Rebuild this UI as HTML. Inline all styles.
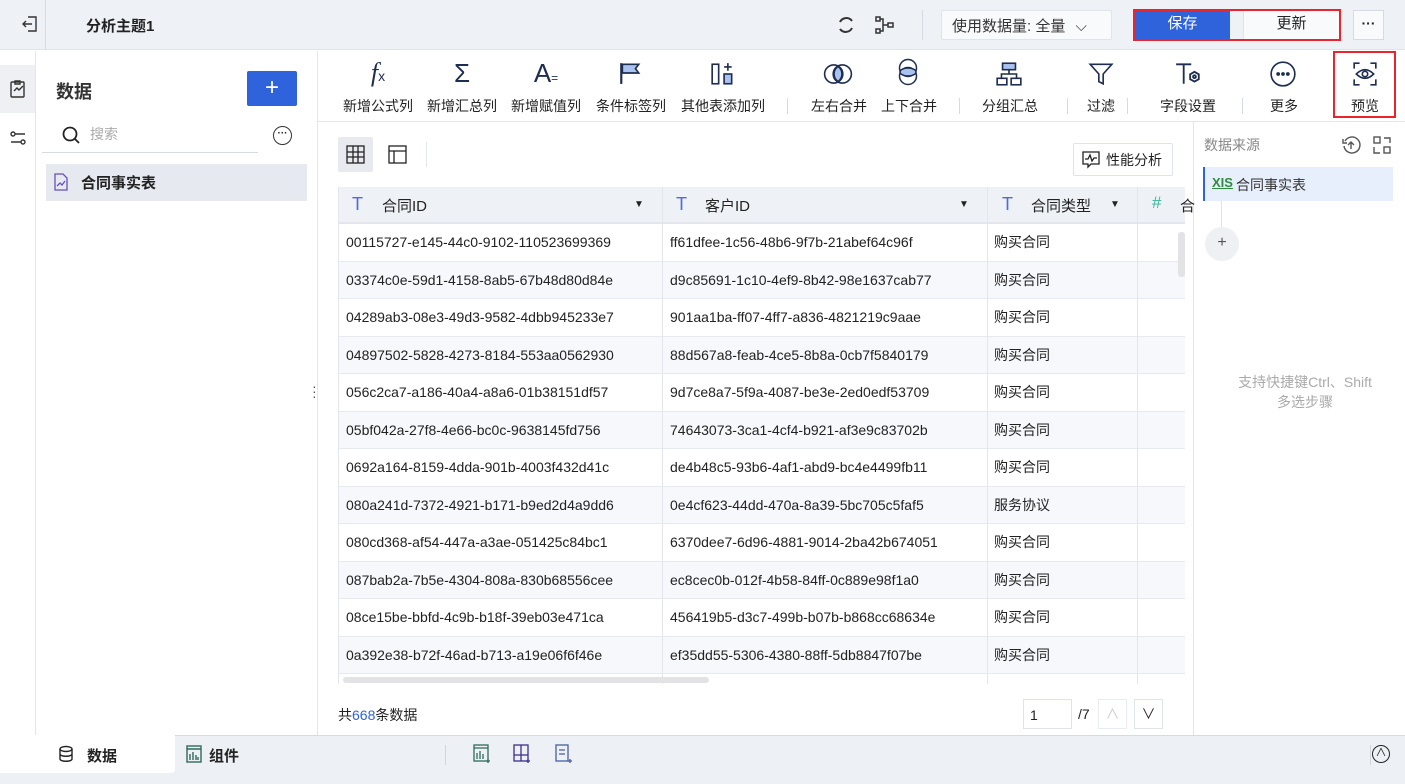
<!DOCTYPE html>
<html><head><meta charset="utf-8"><style>
*{box-sizing:border-box;margin:0;padding:0}
body{width:1405px;height:784px;overflow:hidden;font-family:"Liberation Sans","Noto Sans CJK SC",sans-serif;font-size:14px;color:#222;background:#fff;position:relative}
.a{position:absolute}
.top{left:0;top:0;width:1405px;height:50px;background:#eef1f6;border-bottom:1px solid #dfe3ea}
.tb{font-size:14px;color:#222;text-align:center;width:80px}
.row{position:absolute;left:338px;width:847px;height:37.5px;border-bottom:1px solid #e6e9ef;font-size:14px;color:#222}
.row span{position:absolute;top:10px}
.row span.c{top:8px}
.sh{background:#f7f8fb}
.vl{position:absolute;top:187px;width:1px;height:497px;background:#e3e6ec}
</style></head><body>
<div class="a top"></div>
<div class="a" style="left:45px;top:0;width:1px;height:50px;background:#d6dae2"></div>
<svg class="a" style="left:20px;top:14px" width="20" height="20" viewBox="0 0 20 20" fill="none" stroke="#333" stroke-width="1.4"><path d="M8 3h8v14H8M3 10h9M6 7l-3 3 3 3"/></svg>
<div class="a" style="left:86px;top:15px;font-weight:bold;font-size:15px">分析主题1</div>
<svg class="a" style="left:835px;top:14px" width="22" height="22" viewBox="0 0 22 22" fill="none" stroke="#333" stroke-width="2"><path d="M5 8a7 7 0 0 1 12-1M17 14a7 7 0 0 1-12 1"/></svg>
<svg class="a" style="left:874px;top:14px" width="22" height="22" viewBox="0 0 22 22" fill="none" stroke="#333" stroke-width="1.5"><rect x="2" y="3" width="4" height="4"/><rect x="2" y="15" width="4" height="4"/><rect x="14" y="9" width="5" height="4"/><path d="M6 5h3v12H6M9 11h5"/></svg>
<div class="a" style="left:922px;top:10px;width:1px;height:30px;background:#d6dae2"></div>
<div class="a" style="left:941px;top:10px;width:171px;height:30px;background:#f9fafc;border:1px solid #dfe3ea;border-radius:2px;padding:4px 10px;font-size:15px;color:#333">使用数据量: 全量 <span style="margin-left:6px">⌵</span></div>
<div class="a" style="left:1133px;top:9px;width:208px;height:32px;border:2px solid #e8242f"></div>
<div class="a" style="left:1135px;top:11px;width:95px;height:28px;background:#2e63dc;color:#fff;font-size:15px;text-align:center;line-height:26px">保存</div>
<div class="a" style="left:1243px;top:11px;width:96px;height:28px;background:#f9fafc;border-left:1px solid #dfe3ea;font-size:15px;text-align:center;line-height:26px">更新</div>
<div class="a" style="left:1353px;top:10px;width:31px;height:30px;border:1px solid #d6dae2;background:#f9fafc;text-align:center;line-height:24px;font-weight:bold">···</div>

<div class="a" style="left:35px;top:51px;width:1px;height:684px;background:#e3e6ec"></div>
<div class="a" style="left:0;top:65px;width:35px;height:48px;background:#eef0f4"></div>
<svg class="a" style="left:8px;top:79px" width="20" height="20" viewBox="0 0 20 20" fill="none" stroke="#333" stroke-width="1.4"><rect x="3" y="3" width="13" height="15" rx="1"/><path d="M7 2h5v3H7zM6 12l3-3 2 2 4-4"/></svg>
<svg class="a" style="left:8px;top:128px" width="20" height="20" viewBox="0 0 20 20" fill="none" stroke="#333" stroke-width="1.4"><circle cx="5" cy="6" r="2"/><circle cx="15" cy="14" r="2"/><path d="M7 6h10M3 14h10"/></svg>
<div class="a" style="left:317px;top:51px;width:1px;height:684px;background:#e3e6ec"></div>
<div class="a" style="left:56px;top:78px;font-size:18px;font-weight:bold;color:#333">数据</div>
<div class="a" style="left:247px;top:71px;width:50px;height:35px;background:#2e63dc;border-radius:2px;color:#fff;font-size:24px;text-align:center;line-height:33px">+</div>
<svg class="a" style="left:61px;top:125px" width="20" height="20" viewBox="0 0 20 20" fill="none" stroke="#222" stroke-width="1.8"><circle cx="9" cy="9" r="6.5"/><path d="M14 14l4 4"/></svg>
<div class="a" style="left:90px;top:124px;color:#aaa;font-size:14px">搜索</div>
<div class="a" style="left:42px;top:152px;width:216px;height:1px;background:#d6dae2"></div>
<div class="a" style="left:273px;top:126px;width:19px;height:19px;border:1.5px solid #333;border-radius:50%;font-size:10px;text-align:center;line-height:13px;font-weight:bold">···</div>
<div class="a" style="left:46px;top:164px;width:261px;height:37px;background:#e6e9f0"></div>
<svg class="a" style="left:53px;top:173px" width="16" height="18" viewBox="0 0 16 18" fill="none" stroke="#6a4fbf" stroke-width="1.3"><path d="M2 1h8l4 4v12H2z"/><path d="M4 13l3-3 2 2 3-4"/></svg>
<div class="a" style="left:81px;top:172px;font-weight:bold;font-size:15px">合同事实表</div>
<div class="a" style="left:312px;top:384px;font-size:14px;color:#555;line-height:5px">·<br>·<br>·</div>

<div class="a" style="left:318px;top:121px;width:1087px;height:1px;background:#e3e6ec"></div>
<div class="a" style="left:1193px;top:122px;width:1px;height:613px;background:#e3e6ec"></div>
<div class="a" style="left:0;top:58px;width:1405px;height:60px;font-size:14px">
<div class="a" style="left:338px;top:0;width:80px;text-align:center;font-size:26px;font-style:italic;font-family:'Liberation Serif',serif;color:#1f2d50">f<span style="font-size:14px;font-style:normal;font-family:'Liberation Sans'">x</span></div>
<div class="a" style="left:422px;top:0;width:80px;text-align:center;font-size:26px;color:#1f2d50">Σ</div>
<div class="a" style="left:506px;top:0;width:80px;text-align:center;font-size:26px;color:#1f2d50">A<span style="font-size:12px">=</span></div>
<svg class="a" style="left:618px;top:3px" width="24" height="24" viewBox="0 0 22 22"><path d="M3 2v19" stroke="#1f2d50" stroke-width="2"/><path d="M4 3h15l-3 4 3 4H4z" fill="#a9c3f0" stroke="#1f2d50" stroke-width="1.5"/></svg>
<svg class="a" style="left:710px;top:3px" width="26" height="26" viewBox="0 0 24 24" fill="none" stroke="#1f2d50" stroke-width="1.5"><rect x="2" y="3" width="6" height="18"/><rect x="13" y="12" width="7" height="9" fill="#a9c3f0"/><path d="M16.5 2v7M13 5.5h7"/></svg>
<svg class="a" style="left:823px;top:3px" width="30" height="26" viewBox="0 0 28 24" fill="none" stroke="#1f2d50" stroke-width="1.5"><circle cx="10" cy="12" r="8.5"/><circle cx="18" cy="12" r="8.5"/><path d="M14 5a8.5 8.5 0 0 1 0 14a8.5 8.5 0 0 1 0-14z" fill="#a9c3f0"/></svg>
<svg class="a" style="left:895px;top:0px" width="26" height="30" viewBox="0 0 24 30" fill="none" stroke="#1f2d50" stroke-width="1.5"><circle cx="12" cy="10" r="8.5"/><circle cx="12" cy="18" r="8.5"/><ellipse cx="12" cy="14" rx="8" ry="4" fill="#a9c3f0"/></svg>
<svg class="a" style="left:995px;top:3px" width="28" height="26" viewBox="0 0 26 24" fill="none" stroke="#1f2d50" stroke-width="1.5"><rect x="7" y="2" width="12" height="6" fill="#a9c3f0"/><rect x="2" y="16" width="9" height="6"/><rect x="15" y="16" width="9" height="6"/><path d="M13 8v4M6 16v-4h14v4"/></svg>
<svg class="a" style="left:1088px;top:3px" width="26" height="26" viewBox="0 0 24 24" fill="none" stroke="#1f2d50" stroke-width="1.5"><path d="M2 3h20l-8 9v9l-4-2v-7z"/></svg>
<svg class="a" style="left:1174px;top:3px" width="28" height="26" viewBox="0 0 26 24" fill="none" stroke="#1f2d50" stroke-width="1.7"><path d="M2 3h14M9 3v18"/><path d="M19 10l4 2.3v4.5L19 19l-4-2.2v-4.5z"/><circle cx="19" cy="14.5" r="1.3"/></svg>
<svg class="a" style="left:1269px;top:2px" width="28" height="28" viewBox="0 0 26 26" fill="none" stroke="#1f2d50" stroke-width="1.5"><circle cx="13" cy="13" r="11"/><circle cx="8.5" cy="13" r="1" fill="#1f2d50"/><circle cx="13" cy="13" r="1" fill="#1f2d50"/><circle cx="17.5" cy="13" r="1" fill="#1f2d50"/></svg>
<svg class="a" style="left:1352px;top:3px" width="26" height="26" viewBox="0 0 24 24" fill="none" stroke="#1f2d50" stroke-width="1.5"><path d="M2 7V2h5M17 2h5v5M22 17v5h-5M7 22H2v-5"/><path d="M4 12q8-8 16 0q-8 8-16 0z"/><circle cx="12" cy="12" r="2.5"/></svg>
<div class="a tb" style="left:338px;top:38px">新增公式列</div>
<div class="a tb" style="left:422px;top:38px">新增汇总列</div>
<div class="a tb" style="left:506px;top:38px">新增赋值列</div>
<div class="a tb" style="left:591px;top:38px">条件标签列</div>
<div class="a tb" style="left:675px;top:38px;width:96px">其他表添加列</div>
<div class="a" style="left:787px;top:40px;width:1px;height:16px;background:#d6dae2"></div>
<div class="a tb" style="left:799px;top:38px">左右合并</div>
<div class="a tb" style="left:869px;top:38px">上下合并</div>
<div class="a" style="left:959px;top:40px;width:1px;height:16px;background:#d6dae2"></div>
<div class="a tb" style="left:970px;top:38px">分组汇总</div>
<div class="a" style="left:1067px;top:40px;width:1px;height:16px;background:#d6dae2"></div>
<div class="a tb" style="left:1061px;top:38px">过滤</div>
<div class="a" style="left:1127px;top:40px;width:1px;height:16px;background:#d6dae2"></div>
<div class="a tb" style="left:1148px;top:38px">字段设置</div>
<div class="a" style="left:1242px;top:40px;width:1px;height:16px;background:#d6dae2"></div>
<div class="a tb" style="left:1244px;top:38px">更多</div>
<div class="a tb" style="left:1325px;top:38px">预览</div>
</div>
<div class="a" style="left:1333px;top:51px;width:63px;height:67px;border:2px solid #e8242f"></div>

<div class="a" style="left:338px;top:137px;width:35px;height:35px;background:#e8eaef;border-radius:2px"></div>
<svg class="a" style="left:346px;top:145px" width="19" height="19" viewBox="0 0 19 19" fill="none" stroke="#222" stroke-width="1.3"><rect x="1" y="1" width="17" height="17"/><path d="M7 1v17M12 1v17M1 7h17M1 12h17"/></svg>
<svg class="a" style="left:388px;top:145px" width="19" height="19" viewBox="0 0 19 19" fill="none" stroke="#222" stroke-width="1.3"><rect x="1" y="1" width="17" height="17"/><path d="M1 6h17M6 6v12"/></svg>
<div class="a" style="left:426px;top:142px;width:1px;height:25px;background:#e3e6ec"></div>
<div class="a" style="left:1073px;top:143px;width:100px;height:33px;border:1px solid #dfe3ea;border-radius:2px;padding:6px 0 0 32px;font-size:14px">性能分析</div>
<svg class="a" style="left:1082px;top:151px" width="18" height="18" viewBox="0 0 18 18" fill="none" stroke="#222" stroke-width="1.3"><path d="M1 1h16v12H9l-3 3v-3H1z"/><path d="M3 8h3l2-4 2 6 2-3h3"/></svg>

<div class="a" style="left:338px;top:187px;width:847px;height:37px;background:#eef1f6;border-bottom:2px solid #e3e6ec"></div>
<div class="a" style="left:352px;top:194px;color:#4d6be0;font-size:18px">T</div>
<div class="a" style="left:382px;top:195px;font-size:15px">合同ID</div>
<div class="a" style="left:634px;top:199px;font-size:10px">▼</div>
<div class="a" style="left:676px;top:194px;color:#4d6be0;font-size:18px">T</div>
<div class="a" style="left:705px;top:195px;font-size:15px">客户ID</div>
<div class="a" style="left:959px;top:199px;font-size:10px">▼</div>
<div class="a" style="left:1002px;top:194px;color:#4d6be0;font-size:18px">T</div>
<div class="a" style="left:1031px;top:195px;font-size:15px">合同类型</div>
<div class="a" style="left:1110px;top:199px;font-size:10px">▼</div>
<div class="a" style="left:1152px;top:193px;color:#3bb59a;font-size:17px">#</div>
<div class="a" style="left:1180px;top:195px;font-size:15px">合</div>

<div class="row" style="top:224px"><span style="left:8px">00115727-e145-44c0-9102-110523699369</span><span style="left:332px">ff61dfee-1c56-48b6-9f7b-21abef64c96f</span><span class="c" style="left:656px">购买合同</span></div>
<div class="row sh" style="top:261.5px"><span style="left:8px">03374c0e-59d1-4158-8ab5-67b48d80d84e</span><span style="left:332px">d9c85691-1c10-4ef9-8b42-98e1637cab77</span><span class="c" style="left:656px">购买合同</span></div>
<div class="row" style="top:299px"><span style="left:8px">04289ab3-08e3-49d3-9582-4dbb945233e7</span><span style="left:332px">901aa1ba-ff07-4ff7-a836-4821219c9aae</span><span class="c" style="left:656px">购买合同</span></div>
<div class="row sh" style="top:336.5px"><span style="left:8px">04897502-5828-4273-8184-553aa0562930</span><span style="left:332px">88d567a8-feab-4ce5-8b8a-0cb7f5840179</span><span class="c" style="left:656px">购买合同</span></div>
<div class="row" style="top:374px"><span style="left:8px">056c2ca7-a186-40a4-a8a6-01b38151df57</span><span style="left:332px">9d7ce8a7-5f9a-4087-be3e-2ed0edf53709</span><span class="c" style="left:656px">购买合同</span></div>
<div class="row sh" style="top:411.5px"><span style="left:8px">05bf042a-27f8-4e66-bc0c-9638145fd756</span><span style="left:332px">74643073-3ca1-4cf4-b921-af3e9c83702b</span><span class="c" style="left:656px">购买合同</span></div>
<div class="row" style="top:449px"><span style="left:8px">0692a164-8159-4dda-901b-4003f432d41c</span><span style="left:332px">de4b48c5-93b6-4af1-abd9-bc4e4499fb11</span><span class="c" style="left:656px">购买合同</span></div>
<div class="row sh" style="top:486.5px"><span style="left:8px">080a241d-7372-4921-b171-b9ed2d4a9dd6</span><span style="left:332px">0e4cf623-44dd-470a-8a39-5bc705c5faf5</span><span class="c" style="left:656px">服务协议</span></div>
<div class="row" style="top:524px"><span style="left:8px">080cd368-af54-447a-a3ae-051425c84bc1</span><span style="left:332px">6370dee7-6d96-4881-9014-2ba42b674051</span><span class="c" style="left:656px">购买合同</span></div>
<div class="row sh" style="top:561.5px"><span style="left:8px">087bab2a-7b5e-4304-808a-830b68556cee</span><span style="left:332px">ec8cec0b-012f-4b58-84ff-0c889e98f1a0</span><span class="c" style="left:656px">购买合同</span></div>
<div class="row" style="top:599px"><span style="left:8px">08ce15be-bbfd-4c9b-b18f-39eb03e471ca</span><span style="left:332px">456419b5-d3c7-499b-b07b-b868cc68634e</span><span class="c" style="left:656px">购买合同</span></div>
<div class="row sh" style="top:636.5px"><span style="left:8px">0a392e38-b72f-46ad-b713-a19e06f6f46e</span><span style="left:332px">ef35dd55-5306-4380-88ff-5db8847f07be</span><span class="c" style="left:656px">购买合同</span></div>
<div class="vl" style="left:338px"></div><div class="vl" style="left:662px"></div><div class="vl" style="left:987px"></div><div class="vl" style="left:1137px"></div>
<div class="a" style="left:343px;top:677px;width:366px;height:6px;background:#e3e3e5;border-radius:3px"></div>
<div class="a" style="left:1178px;top:232px;width:7px;height:45px;background:#e3e3e5;border-radius:3px"></div>

<div class="a" style="left:338px;top:705px;font-size:14px">共<span style="color:#2e63dc">668</span>条数据</div>
<div class="a" style="left:1023px;top:699px;width:49px;height:30px;border:1px solid #dfe3ea;padding:7px 0 0 6px">1</div>
<div class="a" style="left:1078px;top:706px">/7</div>
<div class="a" style="left:1098px;top:699px;width:29px;height:30px;border:1px solid #e8ebf0;color:#ccc;text-align:center;line-height:28px">∧</div>
<div class="a" style="left:1134px;top:699px;width:29px;height:30px;border:1px solid #dfe3ea;text-align:center;line-height:28px">∨</div>

<div class="a" style="left:1204px;top:135px;color:#888;font-size:14px">数据来源</div>
<svg class="a" style="left:1341px;top:135px" width="20" height="20" viewBox="0 0 20 20" fill="none" stroke="#555" stroke-width="1.4"><path d="M4 6a8 8 0 1 1-1 5M2 4v4h4M10 14V7M7 10l3-3 3 3"/></svg>
<svg class="a" style="left:1372px;top:135px" width="20" height="20" viewBox="0 0 20 20" fill="none" stroke="#555" stroke-width="1.4"><rect x="2" y="2" width="6" height="6"/><rect x="12" y="12" width="6" height="6"/><path d="M12 3h6v5M2 12v6h6"/></svg>
<div class="a" style="left:1203px;top:167px;width:190px;height:34px;background:#e8effc;border-left:2px solid #2e63dc"></div>
<div class="a" style="left:1212px;top:175px;color:#2e8b3e;font-weight:bold;font-size:13px;text-decoration:underline">XIS</div>
<div class="a" style="left:1236px;top:175px;font-size:14px;color:#333">合同事实表</div>
<div class="a" style="left:1221px;top:201px;width:1px;height:26px;background:#dfe3ea"></div>
<div class="a" style="left:1205px;top:227px;width:34px;height:34px;border-radius:50%;background:#eef0f4;text-align:center;line-height:32px;font-size:16px;color:#555">+</div>
<div class="a" style="left:1210px;top:372px;width:190px;text-align:center;color:#aaa;font-size:14px;line-height:20px">支持快捷键Ctrl、Shift<br>多选步骤</div>

<div class="a" style="left:0;top:735px;width:1405px;height:49px;background:#edf0f5;border-top:1px solid #d6dae2"></div>
<div class="a" style="left:0;top:735px;width:175px;height:38px;background:#fff;border-radius:0 0 4px 0"></div>
<svg class="a" style="left:58px;top:745px" width="16" height="18" viewBox="0 0 16 18" fill="none" stroke="#222" stroke-width="1.4"><ellipse cx="8" cy="4" rx="6" ry="2.5"/><path d="M2 4v10c0 3 12 3 12 0V4M2 9c0 3 12 3 12 0"/></svg>
<div class="a" style="left:87px;top:745px;font-weight:bold;font-size:15px">数据</div>
<svg class="a" style="left:186px;top:745px" width="16" height="18" viewBox="0 0 16 18" fill="none" stroke="#2e6b5a" stroke-width="1.4"><rect x="1" y="1" width="14" height="16"/><path d="M1 4h14M4 15V9M7 15V7M10 15v-5M12 15v-3"/></svg>
<div class="a" style="left:209px;top:745px;font-weight:bold;font-size:15px">组件</div>
<div class="a" style="left:445px;top:745px;width:1px;height:20px;background:#d0d4dc"></div>
<svg class="a" style="left:473px;top:744px" width="20" height="20" viewBox="0 0 20 20" fill="none" stroke="#2e6b5a" stroke-width="1.3"><rect x="1" y="1" width="14" height="16"/><path d="M1 4h14M4 15V9M7 15V7M10 15v-5M15 15v4M13 17h4"/></svg>
<svg class="a" style="left:513px;top:744px" width="20" height="20" viewBox="0 0 20 20" fill="none" stroke="#3a2f8a" stroke-width="1.3"><rect x="1" y="1" width="14" height="16"/><path d="M1 11h14M8 1v16M15 15v4M13 17h4"/></svg>
<svg class="a" style="left:555px;top:744px" width="20" height="20" viewBox="0 0 20 20" fill="none" stroke="#4a5ea0" stroke-width="1.3"><rect x="1" y="1" width="12" height="16"/><path d="M4 6h6M4 10h6M15 15v4M13 17h4"/></svg>
<div class="a" style="left:1370px;top:745px;width:1px;height:20px;background:#d0d4dc"></div>
<div class="a" style="left:1372px;top:745px;width:18px;height:18px;border:1.5px solid #222;border-radius:50%;text-align:center;font-size:11px;line-height:15px">∧</div>
</body></html>
